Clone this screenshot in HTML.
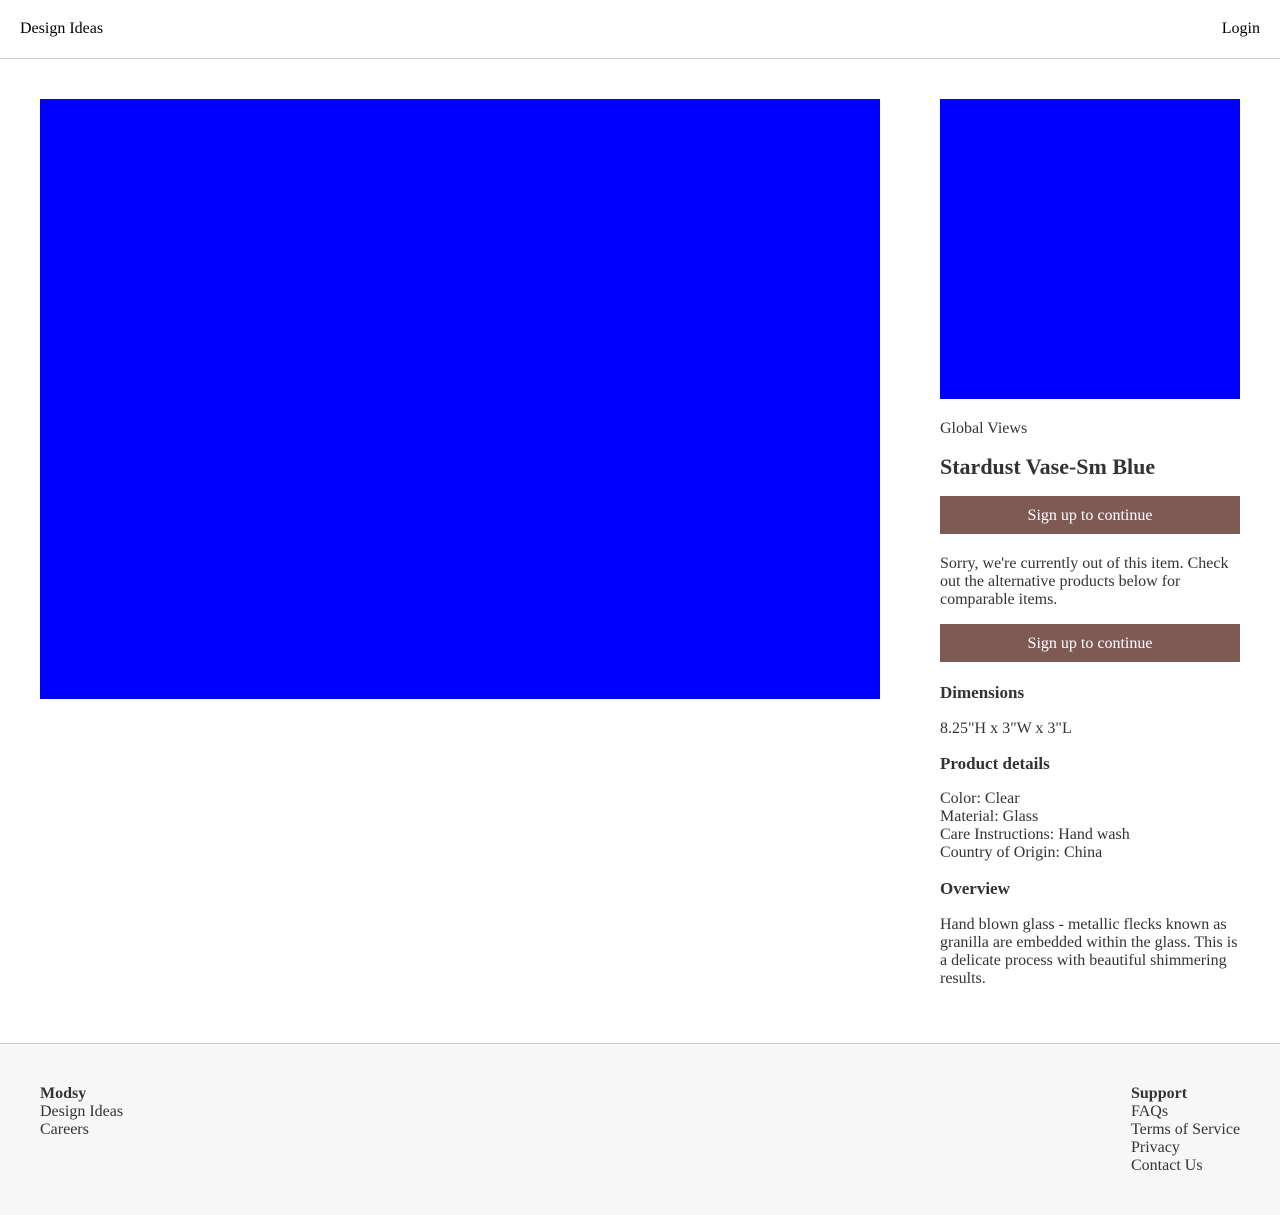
<!DOCTYPE html>
<html><head><meta charset="utf-8"><style>
body{margin:0;width:1280px;height:1214px;position:relative;font-family:"Liberation Serif",serif;font-size:16px;line-height:18px;color:#333;background:#fff;overflow:hidden}
.a{position:absolute}
.hdr{left:0;top:0;width:1280px;height:58px;border-bottom:1px solid #ccc}
.btn{position:absolute;left:940px;width:300px;height:38px;background:#7f5a55;color:#fff;text-align:center;line-height:40px}
b{font-weight:bold}
.h{font-weight:bold;font-size:17px}
.foot{left:0;top:1043px;width:1280px;height:171px;background:#f7f7f7;border-top:1px solid #ccc}
</style></head><body>
<div class="a hdr"></div>
<div class="a" style="left:20px;top:20px;color:#000">Design Ideas</div>
<div class="a" style="right:20px;top:20px;color:#000">Login</div>
<div class="a" style="left:40px;top:99px;width:840px;height:600px;background:#00f"></div>
<div class="a" style="left:940px;top:99px;width:300px;height:300px;background:#00f"></div>
<div class="a" style="left:940px;top:420px">Global Views</div>
<div class="a" style="left:940px;top:454px;font-size:22px;line-height:26px;font-weight:bold">Stardust Vase-Sm Blue</div>
<div class="btn" style="top:496px">Sign up to continue</div>
<div class="a" style="left:940px;top:555px;width:300px">Sorry, we're currently out of this item. Check out the alternative products below for comparable items.</div>
<div class="btn" style="top:624px">Sign up to continue</div>
<div class="a h" style="left:940px;top:684px">Dimensions</div>
<div class="a" style="left:940px;top:720px">8.25"H x 3"W x 3"L</div>
<div class="a h" style="left:940px;top:755px">Product details</div>
<div class="a" style="left:940px;top:790px">Color: Clear<br>Material: Glass<br>Care Instructions: Hand wash<br>Country of Origin: China</div>
<div class="a h" style="left:940px;top:880px">Overview</div>
<div class="a" style="left:940px;top:916px;width:300px">Hand blown glass - metallic flecks known as granilla are embedded within the glass. This is a delicate process with beautiful shimmering results.</div>
<div class="a foot"></div>
<div class="a" style="left:40px;top:1085px"><b>Modsy</b><br>Design Ideas<br>Careers</div>
<div class="a" style="left:1131px;top:1085px"><b>Support</b><br>FAQs<br>Terms of Service<br>Privacy<br>Contact Us</div>
</body></html>
